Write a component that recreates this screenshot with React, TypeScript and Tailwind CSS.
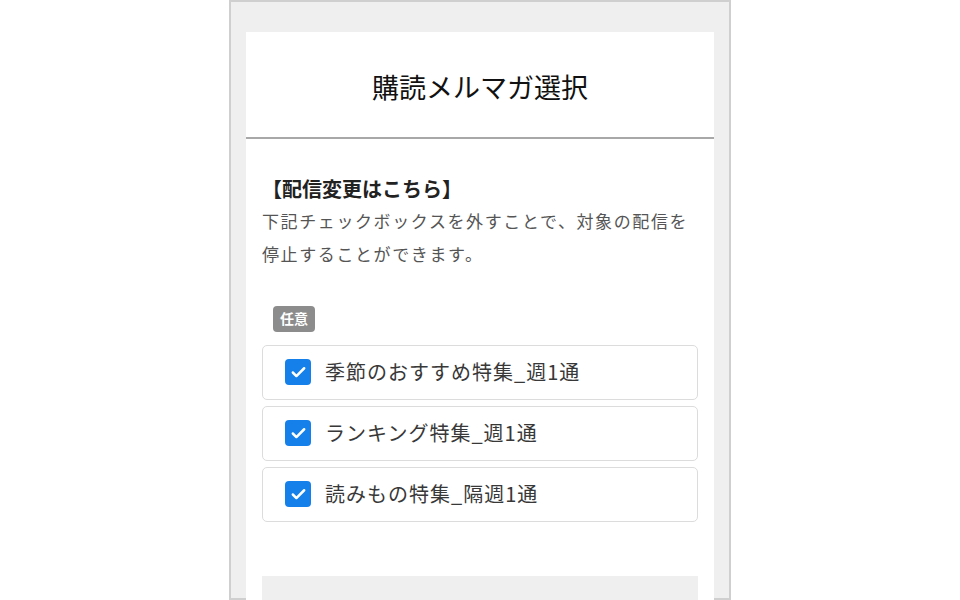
import { Check } from 'lucide-react'

const OPTIONS = [
  '季節のおすすめ特集_週1通',
  'ランキング特集_週1通',
  '読みもの特集_隔週1通',
]

const FONT = "font-['Noto_Sans_CJK_JP',sans-serif]"

function OptionRow({ label }: { label: string }) {
  return (
    <label className="flex h-[55px] items-center gap-[14px] rounded-[5px] border border-[#dcdcdc] bg-white pl-[22px]">
      <span className="flex h-[26px] w-[26px] items-center justify-center rounded-[4px] bg-[#1580e9]">
        <Check size={17} strokeWidth={3.5} className="text-white" />
      </span>
      <span className="text-[20px] tracking-[1px] text-[#383838]">{label}</span>
    </label>
  )
}

export default function App() {
  return (
    <div className={`h-[600px] w-[960px] overflow-hidden bg-white ${FONT}`}>
      <div className="ml-[229px] h-[600px] w-[502px] border-2 border-[#cfcfcf] bg-[#efefef] px-[15px] pt-[30px]">
        <div className="h-[600px] bg-white">
          <div className="flex h-[107px] items-center justify-center border-b-2 border-[#a8a8a8] pt-[6px]">
            <h1 className="text-[27px] font-normal text-[#111]">購読メルマガ選択</h1>
          </div>

          <div className="px-[16px] pt-[36px]">
            <h2 className="text-[20px] font-bold leading-[28px] text-[#222]">【配信変更はこちら】</h2>
            <p className="mt-[1px] text-[17px] leading-[33px] tracking-[1.6px] text-[#555]">
              下記チェックボックスを外すことで、対象の配信を停止することができます。
            </p>

            <div className="mt-[35px] pl-[11px]">
              <span className="inline-flex h-[26px] w-[42px] items-center justify-center rounded-[4px] bg-[#8c8c8c] text-[14px] font-bold text-white">
                任意
              </span>
            </div>

            <div className="mt-[13px] flex flex-col gap-[6px]">
              {OPTIONS.map((o) => (
                <OptionRow key={o} label={o} />
              ))}
            </div>

            <div className="mt-[54px] h-[40px] bg-[#efefef]" />
          </div>
        </div>
      </div>
    </div>
  )
}
